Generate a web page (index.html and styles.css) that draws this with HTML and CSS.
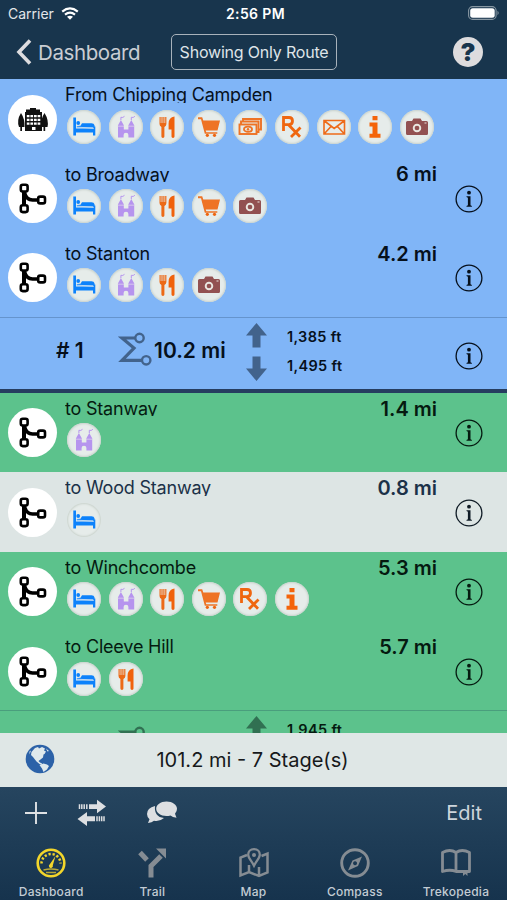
FILE: index.html
```html
<!DOCTYPE html>
<html lang="en">
<head>
    <meta charset="UTF-8">
    <meta name="viewport" content="width=device-width, initial-scale=1.0">
    <title>Dashboard</title>
    <link rel="stylesheet" href="styles.css">
</head>
<body>
    <!-- Icon definitions -->
    <svg class="defs" width="0" height="0">
        <symbol id="bed" viewBox="0 0 34 34">
            <path d="M6.300 7.500h2.700v11h17V16.500h2.300v9h-2.300v-3H9v3H6.300z" fill="#0d82fb"/>
            <circle cx="11.200" cy="13" r="1.900" fill="#0d82fb"/>
            <path d="M9.800 16l3.700-.3 1.500-2.400h9.500q2.500 0 3 2v2.200H9.800z" fill="#0d82fb"/>
            <path d="M9 17l18 1.300" stroke="#cfe2f4" stroke-width=".8"/>
        </symbol>
        <symbol id="castle" viewBox="0 0 34 34">
            <path d="M9 15.300l2.900-5.300 2.900 5.300v4.200h4.600v-4.200l2.900-5.300 2.900 5.300v12.200h-5.800v-2.500q0-2.200-2.400-2.200t-2.400 2.200v2.500H9z" fill="#b694ee"/>
            <path d="M11.900 10V7.300q2 .8 3.600-1M22.300 10V7.300q2 .8 3.600-1" fill="none" stroke="#b694ee" stroke-width="1"/>
            <path d="M8.500 16.200h6.500M19.200 16.200h6.500" stroke="#ddd4ee" stroke-width=".8"/>
        </symbol>
        <symbol id="food" viewBox="0 0 34 34">
            <path d="M9.500 7h1.200v6h.7V7h1.200v6h.7V7h1.200v6h.7V7h1.200v7q0 2-2 3v9.500q0 1.400-1.500 1.400t-1.500-1.400V17q-1.900-1-1.900-3z" fill="#ec6a17"/>
            <path d="M24.500 6.500v20q0 1.400-1.500 1.400t-1.500-1.400v-7h-2.900v-6q0-6 5.900-7z" fill="#f0620c"/>
        </symbol>
        <symbol id="cart" viewBox="0 0 34 34">
            <path d="M6 7.300h4.200l1.100 3.200h16.700l-2.500 10H13.700l.6 1.700h11v1.600H12.800L9 9.200H6z" fill="#ee7325"/>
            <circle cx="15.300" cy="25.300" r="1.600" fill="#ee6510"/>
            <circle cx="22.500" cy="25.300" r="1.600" fill="#ee6510"/>
        </symbol>
        <symbol id="cash" viewBox="0 0 34 34">
            <g fill="none" stroke="#ee7325" stroke-width="1.900">
                <path d="M10 11.500V9h18v10.500h-2"/>
                <path d="M8 14v-2.500h17.500V22H24"/>
                <rect x="6.500" y="14.500" width="17" height="9.500"/>
                <ellipse cx="15" cy="19.200" rx="4" ry="2.600"/>
            </g>
            <circle cx="15" cy="19.200" r="1.200" fill="#ee7325"/>
        </symbol>
        <symbol id="rx" viewBox="0 0 34 34">
            <path d="M8.500 21V7.500h5.500q3.500 0 3.500 3.500t-3.500 3.600H8.500M13.500 14.700l11.500 12M25.500 17.500l-9.500 9.500" fill="none" stroke="#ef660f" stroke-width="2.800"/>
        </symbol>
        <symbol id="mail" viewBox="0 0 34 34">
            <path d="M7 10.500h20.500v13.500H7zM7.500 11l9.700 7.500 9.800-7.500M7.500 23.500l6.500-7M27 23.500l-6.500-7" fill="none" stroke="#ee6b1a" stroke-width="1.600"/>
        </symbol>
        <symbol id="info" viewBox="0 0 34 34">
            <path d="M14.500 6h5v4.300h-5zM11.500 12.500h8v11.300h3v4h-11v-4h3v-7.300h-3z" fill="#f4640a"/>
        </symbol>
        <symbol id="camera" viewBox="0 0 34 34">
            <path d="M7.500 11H12l1.500-2.500h7L22 11h4.500q1.500 0 1.500 1.500v11q0 1.500-1.500 1.500h-19Q6 25 6 23.500v-11Q6 11 7.500 11z" fill="#925151"/>
            <circle cx="17" cy="18" r="3.300" fill="none" stroke="#e9e6e0" stroke-width="1.900"/>
            <path d="M24.500 13h2" stroke="#e9e6e0"/>
        </symbol>
        <symbol id="branch" viewBox="0 0 49 49">
            <g fill="none" stroke="#000" stroke-width="2.600">
                <path d="M16 17v14" stroke-width="4"/>
                <path d="M16.500 18.500q2 7.500 8 7.500h6" stroke-width="3.400"/>
                <rect x="12.800" y="10.800" width="6.800" height="6.800" rx="2"/>
                <rect x="12.800" y="31.300" width="6.800" height="6.800" rx="2"/>
                <rect x="30.200" y="22.600" width="6.800" height="6.800" rx="2"/>
            </g>
        </symbol>
        <symbol id="hotel" viewBox="0 0 49 49">
            <path d="M18 17v-2.500h4V13h6v1.500h4V17h2v19H17V17z" fill="#111"/>
            <path d="M13 18q4 6 3.500 14H14v4h-1.700v-4H11q-2.500-7 2-14zM36.500 18q4.500 7 3 14h-2.300v4H35.500v-4H33Q32.500 24 36.500 18z" fill="#111"/>
            <path d="M18.800 20h2.700v2.200h-2.700zM22.400 20h2.700v2.200h-2.700zM26 20h2.700v2.200H26zM29.600 20h2.700v2.200h-2.700zM18.800 23.800h2.700V26h-2.700zM22.400 23.800h2.700V26h-2.700zM26 23.800h2.700V26H26zM29.600 23.800h2.700V26h-2.700zM18.800 27.600h2.700v2.200h-2.700zM22.400 27.600h2.700v2.200h-2.700zM26 27.600h2.700v2.200H26zM29.600 27.600h2.700v2.200h-2.700zM24 32h3.500v3H24z" fill="#fff"/>
        </symbol>
        <symbol id="details" viewBox="0 0 28 28">
            <circle cx="14" cy="14" r="12.900" fill="none" stroke="currentColor" stroke-width="1.300"/>
            <circle cx="14" cy="7.700" r="1.900" fill="currentColor"/>
            <path d="M11.500 11.300h4v9l1.400.7v.7h-5.400v-.7l1.400-.7v-7.500l-1.400-.7z" fill="currentColor"/>
        </symbol>
        <symbol id="sigma" viewBox="0 0 34 34">
            <g fill="none" stroke="currentColor" stroke-width="2.400">
                <path d="M17 6H4l12 10L4 28.300h19.500" stroke-width="3.200"/>
                <circle cx="21.500" cy="6" r="4.200"/>
                <circle cx="28.200" cy="28.300" r="4.200"/>
            </g>
        </symbol>
        <symbol id="arrow" viewBox="0 0 21 25">
            <path d="M10.500 0L21 12.500h-6.500V24.500h-8V12.500H0z" fill="currentColor"/>
        </symbol>
    </svg>

    <!-- Header -->
    <header>
        <div class="status-bar">
            <div class="carrier">Carrier
                <svg width="18" height="13" viewBox="0 0 18 13">
                    <path d="M1.200 4.600q7.800-6.400 15.600 0M4 7.700q5-4 10 0" fill="none" stroke="#fff" stroke-width="2.200"/>
                    <path d="M9 12.700L6 9.800q3-2.300 6 0z" fill="#fff"/>
                </svg>
            </div>
            <div class="time">2:56 PM</div>
            <svg class="battery" width="32" height="14" viewBox="0 0 32 14">
                <rect x=".6" y=".6" width="27.500" height="12.800" rx="4" fill="none" stroke="#8797a2" stroke-width="1.100"/>
                <rect x="2.200" y="2.200" width="24.500" height="9.600" rx="2.500" fill="#fff"/>
                <path d="M29.500 4.800q2.400 2.200 0 4.400z" fill="#8797a2"/>
            </svg>
        </div>
        <nav>
            <a class="back" href="#">
                <svg width="16" height="26" viewBox="0 0 16 26"><path d="M14 1.500L3 13l11 11.500" fill="none" stroke="#dddcdf" stroke-width="3.600"/></svg>
                <span>Dashboard</span>
            </a>
            <button class="filter">Showing Only Route</button>
            <div class="help">?</div>
        </nav>
    </header>

    <!-- Stage List -->
    <main>
        <div class="row blue">
            <div class="marker"><svg><use href="#hotel"/></svg></div>
            <div class="place">
                <div class="name">From Chipping Campden</div>
                <div class="services">
                    <svg><use href="#bed"/></svg>
                    <svg><use href="#castle"/></svg>
                    <svg><use href="#food"/></svg>
                    <svg><use href="#cart"/></svg>
                    <svg><use href="#cash"/></svg>
                    <svg><use href="#rx"/></svg>
                    <svg><use href="#mail"/></svg>
                    <svg><use href="#info"/></svg>
                    <svg><use href="#camera"/></svg>
                </div>
            </div>
        </div>
        <div class="row blue">
            <div class="marker"><svg><use href="#branch"/></svg></div>
            <div class="place">
                <div class="name">to Broadway</div>
                <div class="services">
                    <svg><use href="#bed"/></svg>
                    <svg><use href="#castle"/></svg>
                    <svg><use href="#food"/></svg>
                    <svg><use href="#cart"/></svg>
                    <svg><use href="#camera"/></svg>
                </div>
            </div>
            <div class="miles">6 mi</div>
            <svg class="details"><use href="#details"/></svg>
        </div>
        <div class="row blue">
            <div class="marker"><svg><use href="#branch"/></svg></div>
            <div class="place">
                <div class="name">to Stanton</div>
                <div class="services">
                    <svg><use href="#bed"/></svg>
                    <svg><use href="#castle"/></svg>
                    <svg><use href="#food"/></svg>
                    <svg><use href="#camera"/></svg>
                </div>
            </div>
            <div class="miles">4.2 mi</div>
            <svg class="details"><use href="#details"/></svg>
        </div>
        <div class="summary blue">
            <div class="stage"># 1</div>
            <svg class="sigma"><use href="#sigma"/></svg>
            <div class="total">10.2 mi</div>
            <div class="arrows">
                <svg><use href="#arrow"/></svg>
                <svg class="down"><use href="#arrow"/></svg>
            </div>
            <div class="climb">
                <div>1,385 ft</div>
                <div>1,495 ft</div>
            </div>
            <svg class="details"><use href="#details"/></svg>
        </div>
        <div class="divider"></div>
        <div class="row green">
            <div class="marker"><svg><use href="#branch"/></svg></div>
            <div class="place">
                <div class="name">to Stanway</div>
                <div class="services">
                    <svg><use href="#castle"/></svg>
                </div>
            </div>
            <div class="miles">1.4 mi</div>
            <svg class="details"><use href="#details"/></svg>
        </div>
        <div class="row grey">
            <div class="marker"><svg><use href="#branch"/></svg></div>
            <div class="place">
                <div class="name">to Wood Stanway</div>
                <div class="services">
                    <svg><use href="#bed"/></svg>
                </div>
            </div>
            <div class="miles">0.8 mi</div>
            <svg class="details"><use href="#details"/></svg>
        </div>
        <div class="row green">
            <div class="marker"><svg><use href="#branch"/></svg></div>
            <div class="place">
                <div class="name">to Winchcombe</div>
                <div class="services">
                    <svg><use href="#bed"/></svg>
                    <svg><use href="#castle"/></svg>
                    <svg><use href="#food"/></svg>
                    <svg><use href="#cart"/></svg>
                    <svg><use href="#rx"/></svg>
                    <svg><use href="#info"/></svg>
                </div>
            </div>
            <div class="miles">5.3 mi</div>
            <svg class="details"><use href="#details"/></svg>
        </div>
        <div class="row green">
            <div class="marker"><svg><use href="#branch"/></svg></div>
            <div class="place">
                <div class="name">to Cleeve Hill</div>
                <div class="services">
                    <svg><use href="#bed"/></svg>
                    <svg><use href="#food"/></svg>
                </div>
            </div>
            <div class="miles">5.7 mi</div>
            <svg class="details"><use href="#details"/></svg>
        </div>
        <div class="summary green">
            <div class="stage"></div>
            <svg class="sigma"><use href="#sigma"/></svg>
            <div class="total"></div>
            <div class="arrows">
                <svg><use href="#arrow"/></svg>
            </div>
            <div class="climb">
                <div>1,945 ft</div>
            </div>
        </div>
    </main>

    <!-- Trip Total -->
    <div class="trip">
        <svg class="globe" width="30" height="30" viewBox="0 0 30 30">
            <circle cx="15" cy="15" r="14.300" fill="#2c62a8"/>
            <path d="M6.500 8L10 4l3-1 1 1.500 3-1.500 3 1.500-1 2 2 1-1.500 2.500-1 .5-.5 3-2.500 2-2 1.500 1.500 1.500 2 1 .5 1.500-3-1-3-2.500L8 13 6 11z" fill="#dfe9ec"/>
            <path d="M14.500 21l4-1.500 3.500 1 2 1.500-2 3.500-3.500 2.500-1.500-3.500zM4.500 7.500l1.500-1-1.500 4zM21 4.500l3 2.500-1.500.5z" fill="#dfe9ec"/>
        </svg>
        <div class="trip-text">101.2 mi - 7 Stage(s)</div>
    </div>

    <!-- Bottom Bars -->
    <footer>
        <div class="toolbar">
            <svg class="plus" width="22" height="22" viewBox="0 0 22 22"><path d="M11 0v22M0 11h22" stroke="#dfe1e4" stroke-width="1.900"/></svg>
            <svg class="swap" width="30" height="28" viewBox="0 0 30 28">
                <path d="M12 5.200h8V.8l9 6.700-9 6.700V10h-8zM18 17.200h-8v-4.200L.5 20 10 27v-4.700h8z" fill="#dddfe2"/>
                <path d="M2.500 5.200V10M4.800 5.200V10M7.200 5.200V10M9.800 5.200V10M20 17.200v5M22.400 17.200v5M24.700 17.200v5M27 17.200v5" stroke="#dddfe2" stroke-width="1.500"/>
            </svg>
            <svg class="chat" width="32" height="24" viewBox="0 0 32 24">
                <path d="M9 6Q1 8 1 14q0 3 2.500 5.200L2 23q4-.5 6-2.300 6 1 10-2.700-10-1-9-12z" fill="#dddfe2"/>
                <path d="M20.500 1.500c6 0 10.500 3.300 10.500 7.300q0 3-2 4.900l1.500 4q-4-.5-6-2.300-2 .6-4 .6c-6 0-10.300-3.200-10.300-7.200S14.500 1.500 20.500 1.500z" fill="#dddfe2"/>
            </svg>
            <a class="edit" href="#">Edit</a>
        </div>
        <div class="tabs">
            <a href="#">
                <svg viewBox="0 0 30 30">
                    <circle cx="15" cy="15" r="13.300" fill="none" stroke="#f3d62b" stroke-width="2.600"/>
                    <path d="M5.500 15.500a9.500 9.500 0 0 1 19 0" fill="none" stroke="#f3d62b" stroke-width="2.500" stroke-dasharray="2.200 1.900"/>
                    <path d="M19.500 8l-2.700 9.300a2 2 0 1 1-3-1z" fill="#f3d62b"/>
                    <path d="M7.500 22q7.500-1.800 15 0M10 24.500h10" stroke="#b6a83a" stroke-width="1.500" fill="none"/>
                </svg>
                <span>Dashboard</span>
            </a>
            <a href="#">
                <svg viewBox="0 0 30 30">
                    <path d="M14 29.500V18L24 8M3 4.500l7 7.500" fill="none" stroke="#858c93" stroke-width="5"/>
                    <path d="M19 0.500H29v10z" fill="#858c93"/>
                </svg>
                <span>Trail</span>
            </a>
            <a href="#">
                <svg viewBox="0 0 30 30">
                    <path d="M8 7L1.500 9.500v18L10 24l10 4 8.500-3.500v-19L22.500 8M10 17v7M20 19v9" fill="none" stroke="#858c93" stroke-width="2.500"/>
                    <path d="M15 1.200c3.700 0 5.800 2.600 5.800 5.500 0 3.500-3.500 6.300-5.800 11-2.300-4.700-5.800-7.500-5.800-11 0-2.900 2.100-5.500 5.800-5.500z" fill="none" stroke="#858c93" stroke-width="2.300"/>
                    <circle cx="15" cy="7" r="2" fill="#858c93"/>
                </svg>
                <span>Map</span>
            </a>
            <a href="#">
                <svg viewBox="0 0 30 30">
                    <circle cx="15" cy="15" r="13.300" fill="none" stroke="#858c93" stroke-width="2.900"/>
                    <path fill-rule="evenodd" d="M22 8.500l-4 9.500-10 4.500 4.500-10zM15 13.200a2 2 0 1 0 .1 0z" fill="#858c93"/>
                </svg>
                <span>Compass</span>
            </a>
            <a href="#">
                <svg viewBox="0 0 30 30">
                    <path d="M15 5v18M1.500 23.500V4.500Q9 .5 15 4.500q6-4 13.500 0v19H15Q9 21 1.500 23.500z" fill="none" stroke="#858c93" stroke-width="2.800" stroke-linejoin="round"/>
                    <path d="M22 22h4.500v6l-2.200-2-2.300 2z" fill="#858c93"/>
                </svg>
                <span>Trekopedia</span>
            </a>
        </div>
    </footer>
</body>
</html>
```
FILE: styles.css
```css
* {
    box-sizing: border-box;
}

body {
    font-family: Inter, "Liberation Sans", sans-serif;
    background-color: #18354d;
    margin: 0;
    width: 507px;
    height: 900px;
    overflow: hidden;
    display: flex;
    flex-direction: column;
}

svg {
    display: block;
    flex-shrink: 0;
}

.defs {
    position: absolute;
}

a {
    color: inherit;
    text-decoration: none;
}

/* Header */
header {
    height: 79px;
    flex-shrink: 0;
    color: white;
    background-color: #18354d;
}

.status-bar {
    height: 28px;
    padding: 0 8px;
    display: grid;
    grid-template-columns: 1fr auto 1fr;
    align-items: center;
    font-size: 14px;
}

.carrier {
    display: flex;
    align-items: center;
    gap: 7px;
    margin-top: -2px;
    color: #e3e6e9;
}

.time {
    margin: -2px 0 0 4px;
    font-weight: 600;
    letter-spacing: 0.4px;
}

.battery {
    justify-self: end;
    margin-top: -2px;
    margin-right: -1px;
}

nav {
    height: 49px;
    padding: 0 24px 0 16px;
    display: grid;
    grid-template-columns: 155px 166px 1fr;
    align-items: center;
}

.back {
    display: flex;
    align-items: center;
    gap: 6px;
    margin-top: -1px;
    font-size: 20.5px;
    letter-spacing: -0.4px;
    color: #c9cdd3;
}

.filter {
    height: 36px;
    padding: 0;
    margin-top: -1px;
    background: none;
    border: 1.5px solid #a8b2bb;
    border-radius: 5px;
    color: #dfe4e8;
    font-family: inherit;
    font-size: 16px;
    letter-spacing: -0.2px;
}

.help {
    justify-self: end;
    width: 30px;
    height: 30px;
    margin-top: -2px;
    border-radius: 50%;
    background-color: #dddcde;
    color: #18354d;
    font-size: 25px;
    font-weight: 900;
    line-height: 30px;
    text-align: center;
}

/* Stage List */
main {
    height: 653.5px;
    flex-shrink: 0;
    overflow: hidden;
}

.blue {
    background-color: #80b5f7;
    color: #06101c;
}

.green {
    background-color: #5cc28c;
    color: #051a10;
}

.grey {
    background-color: #dde5e4;
    color: #1b3148;
}

.row {
    height: 79.4px;
    padding: 0 24px 0 8px;
    display: flex;
    align-items: center;
}

.marker {
    width: 49px;
    height: 49px;
    margin-top: 1px;
    border-radius: 50%;
    background-color: white;
    flex-shrink: 0;
}

.marker svg {
    width: 49px;
    height: 49px;
}

.place {
    align-self: flex-start;
    flex: 1;
    margin-left: 8px;
}

.name {
    height: 23.5px;
    padding-top: 5.3px;
    line-height: 22px;
    font-size: 18px;
    letter-spacing: -0.2px;
    white-space: nowrap;
    overflow: hidden;
}

.services {
    display: flex;
    gap: 7.6px;
    margin: 7.2px 0 0 2px;
}

.services svg {
    width: 34px;
    height: 34px;
    border-radius: 50%;
    background-color: #e6ecea;
    box-shadow: inset 0 0 2px 1px #c9d2cc;
}

.miles {
    align-self: flex-start;
    width: 80px;
    margin-right: 18px;
    padding-top: 4px;
    line-height: 24px;
    font-size: 20px;
    font-weight: 600;
    text-align: right;
    white-space: nowrap;
}

.details {
    width: 28px;
    height: 28px;
    margin-top: 2px;
}

.grey .details {
    color: #101c26;
}

.summary {
    height: 71.6px;
    padding: 0 24px 0 0;
    border-top: 1px solid rgba(20, 50, 80, 0.25);
    display: flex;
    align-items: center;
}

.stage {
    width: 62px;
    margin: -6px 0 0 56px;
    font-size: 21px;
    font-weight: 600;
}

.sigma {
    width: 34px;
    height: 34px;
    margin-top: -8px;
    color: #42638c;
}

.total {
    width: 92px;
    margin: -6px 0 0 2px;
    font-size: 21px;
    font-weight: 600;
    white-space: nowrap;
}

.arrows {
    align-self: flex-start;
    padding-top: 5px;
    color: #42638c;
}

.arrows svg {
    width: 21px;
    height: 25px;
    margin-bottom: 8px;
}

.arrows .down {
    transform: rotate(180deg);
}

.green .arrows, .green .sigma {
    color: #317052;
}

.climb {
    align-self: flex-start;
    flex: 1;
    padding-top: 4px;
    margin-left: 20px;
    font-size: 14.5px;
    font-weight: 600;
    letter-spacing: 0.35px;
    line-height: 29px;
}

.summary .details {
    margin-top: 5px;
}

.divider {
    height: 4px;
    background-color: #263d60;
}

/* Trip Total */
.trip {
    height: 54px;
    flex-shrink: 0;
    background-color: #dfe7e6;
    position: relative;
    display: flex;
    align-items: center;
    justify-content: center;
}

.globe {
    position: absolute;
    left: 25px;
    top: 11px;
}

.trip-text {
    margin-left: -2px;
    font-size: 20px;
    color: #17191b;
}

/* Bottom Bars */
footer {
    flex: 1;
    background: linear-gradient(#26455f, #16334d);
}

.toolbar {
    height: 52px;
    padding: 0 25px;
    display: flex;
    align-items: center;
}

.swap {
    margin-left: 30px;
}

.chat {
    margin-left: 39px;
    margin-top: -2px;
}

.edit {
    margin-left: auto;
    font-size: 20px;
    color: #cdd5dc;
}

.tabs {
    display: grid;
    grid-template-columns: repeat(5, 101.2px);
    padding: 9px 0 0 0.6px;
}

.tabs a {
    display: flex;
    flex-direction: column;
    align-items: center;
    font-size: 12px;
    font-weight: 500;
    letter-spacing: 0.25px;
    color: #c3ccd4;
}

.tabs svg {
    width: 30px;
    height: 30px;
    margin-bottom: 6px;
}
```
